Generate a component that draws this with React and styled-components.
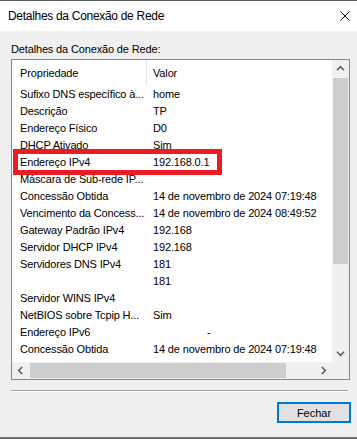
import React from 'react';
import styled, { createGlobalStyle } from 'styled-components';

const rows = [
  { prop: 'Sufixo DNS específico à...', value: 'home' },
  { prop: 'Descrição', value: 'TP' },
  { prop: 'Endereço Físico', value: 'D0' },
  { prop: 'DHCP Ativado', value: 'Sim' },
  { prop: 'Endereço IPv4', value: '192.168.0.1' },
  { prop: 'Máscara de Sub-rede IP...', value: '' },
  { prop: 'Concessão Obtida', value: '14 de novembro de 2024 07:19:48' },
  { prop: 'Vencimento da Concess...', value: '14 de novembro de 2024 08:49:52' },
  { prop: 'Gateway Padrão IPv4', value: '192.168' },
  { prop: 'Servidor DHCP IPv4', value: '192.168' },
  { prop: 'Servidores DNS IPv4', value: '181' },
  { prop: '', value: '181' },
  { prop: 'Servidor WINS IPv4', value: '' },
  { prop: 'NetBIOS sobre Tcpip H...', value: 'Sim' },
  { prop: 'Endereço IPv6', value: '-', indent: 61 },
  { prop: 'Concessão Obtida', value: '14 de novembro de 2024 07:19:48' },
  { prop: 'Vencimento da Concess...', value: '14 de novembro de 2024 08:49:52' },
];

const GlobalStyle = createGlobalStyle`
  html, body {
    margin: 0;
    padding: 0;
    background: #f0f0f0;
  }
  body {
    font-family: "Liberation Sans", Arial, sans-serif;
    color: #000;
  }
`;

const Arrow = ({ dir }) => {
  const rot = { up: 0, right: 90, down: 180, left: 270 }[dir];
  return (
    <svg width="9" height="9" viewBox="0 0 9 9">
      <path
        d="M1 6.2 L4.5 2.7 L8 6.2"
        fill="none"
        stroke="#606060"
        strokeWidth="1.6"
        transform={`rotate(${rot} 4.5 4.5)`}
      />
    </svg>
  );
};

const App = () => (
  <Window>
    <GlobalStyle />
    <TitleBar>
      <Title>Detalhes da Conexão de Rede</Title>
      <CloseIcon width="10" height="10" viewBox="0 0 10 10">
        <path d="M0.5 0.5 L9.5 9.5 M9.5 0.5 L0.5 9.5" stroke="#000" strokeWidth="1" />
      </CloseIcon>
    </TitleBar>
    <Body>
      <Label>Detalhes da Conexão de Rede:</Label>
      <ListBox>
        <Content>
          <HeaderRow>
            <HeaderCell>Propriedade</HeaderCell>
            <HeaderCell $divider>Valor</HeaderCell>
          </HeaderRow>
          {rows.map((row, i) => (
            <Row key={i}>
              <PropCell>{row.prop}</PropCell>
              <ValueCell $indent={row.indent}>{row.value}</ValueCell>
            </Row>
          ))}
        </Content>
        <VScroll>
          <ArrowBox><Arrow dir="up" /></ArrowBox>
          <VTrack>
            <VThumb />
          </VTrack>
          <ArrowBox><Arrow dir="down" /></ArrowBox>
        </VScroll>
        <HScroll>
          <ArrowBox><Arrow dir="left" /></ArrowBox>
          <HTrack>
            <HThumb />
          </HTrack>
          <ArrowBox><Arrow dir="right" /></ArrowBox>
        </HScroll>
        <Corner />
      </ListBox>
      <Separator />
      <Footer>
        <Button>Fechar</Button>
      </Footer>
    </Body>
    <Highlight />
  </Window>
);

export default App;

const Window = styled.div`
  position: relative;
  width: 357px;
  height: 439px;
  box-sizing: border-box;
  display: flex;
  flex-direction: column;
  border-top: 1px solid #5c5c5c;
  border-bottom: 2px solid #707070;
  background: #f0f0f0;
`;
const TitleBar = styled.div`
  height: 30px;
  background: #fff;
  display: flex;
  align-items: center;
  justify-content: space-between;
  padding: 0 7px 0 8px;
`;
const Title = styled.span`
  font-size: 12px;
  letter-spacing: -0.3px;
  padding-top: 0;
`;
const CloseIcon = styled.svg`
  display: block;
`;
const Body = styled.div`
  flex: 1;
  display: flex;
  flex-direction: column;
  padding: 11px 7px 0 11px;
`;
const Label = styled.div`
  font-size: 11px;
  letter-spacing: -0.15px;
  line-height: 14px;
  margin-bottom: 3px;
`;
const ListBox = styled.div`
  width: 339px;
  height: 321px;
  box-sizing: border-box;
  border: 1px solid #828790;
  background: #fff;
  display: grid;
  grid-template-columns: 320px 17px;
  grid-template-rows: 302px 17px;
`;
const Content = styled.div`
  overflow: hidden;
  font-size: 11px;
  letter-spacing: -0.15px;
`;
const HeaderRow = styled.div`
  display: flex;
  height: 26px;
  align-items: center;
`;
const HeaderCell = styled.div`
  box-sizing: border-box;
  height: 100%;
  display: flex;
  align-items: center;
  padding-left: ${p => (p.$divider ? 6 : 8)}px;
  width: ${p => (p.$divider ? 'auto' : '134px')};
  border-left: ${p => (p.$divider ? '1px solid #e5e5e5' : 'none')};
  padding-bottom: 1px;
`;
const Row = styled.div`
  display: flex;
  height: 17px;
  line-height: 17px;
  white-space: nowrap;
`;
const PropCell = styled.div`
  width: 134px;
  box-sizing: border-box;
  padding-left: 8px;
  overflow: hidden;
`;
const ValueCell = styled.div`
  padding-left: ${p => p.$indent || 7}px;
`;
const VScroll = styled.div`
  background: #f0f0f0;
  display: flex;
  flex-direction: column;
`;
const ArrowBox = styled.div`
  width: 17px;
  height: 17px;
  flex: none;
  display: flex;
  align-items: center;
  justify-content: center;
`;
const VTrack = styled.div`
  flex: 1;
  padding: 1px 1px 0;
`;
const VThumb = styled.div`
  height: 186px;
  background: #cdcdcd;
`;
const HScroll = styled.div`
  background: #f0f0f0;
  display: flex;
`;
const HTrack = styled.div`
  flex: 1;
  padding: 1px 0 1px 1px;
`;
const HThumb = styled.div`
  width: 256px;
  height: 100%;
  background: #cdcdcd;
`;
const Corner = styled.div`
  background: #f0f0f0;
`;
const Separator = styled.div`
  width: 337px;
  margin-top: 10px;
  border-top: 1px solid #a0a0a0;
  border-bottom: 1px solid #fff;
`;
const Footer = styled.div`
  display: flex;
  justify-content: flex-end;
  margin-top: 10px;
`;
const Button = styled.button`
  width: 74px;
  height: 21px;
  box-sizing: border-box;
  border: 2px solid #0078d7;
  background: #e1e1e1;
  font-family: "Liberation Sans", Arial, sans-serif;
  font-size: 11px;
  color: #000;
  padding: 0;
  margin-right: -1px;
`;
const Highlight = styled.div`
  position: absolute;
  left: 13px;
  top: 148px;
  width: 209px;
  height: 26px;
  box-sizing: border-box;
  border: 5px solid #ed1c24;
  pointer-events: none;
`;
